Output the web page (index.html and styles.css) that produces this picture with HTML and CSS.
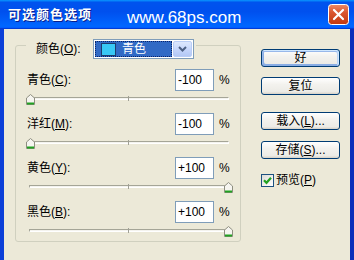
FILE: index.html
```html
<!DOCTYPE html>
<html>
<head>
  <meta charset="utf-8">
  <title>可选颜色选项</title>
  <link rel="stylesheet" href="styles.css">
</head>
<body>
  <div class="window">
    <div class="titlebar">
      <span class="title">可选颜色选项</span>
      <span class="watermark">www.68ps.com</span>
      <svg class="close-btn" width="21" height="21" viewBox="0 0 21 21">
        <defs>
          <linearGradient id="closeFill" x1="0" y1="0" x2="0" y2="1">
            <stop offset="0" stop-color="#EC8A66"/>
            <stop offset="0.4" stop-color="#DA5630"/>
            <stop offset="1" stop-color="#C2380F"/>
          </linearGradient>
        </defs>
        <rect x="0.5" y="0.5" width="20" height="20" rx="3" fill="url(#closeFill)" stroke="#FFFFFF"/>
        <path d="M6 6 L15 15 M15 6 L6 15" stroke="#FFFFFF" stroke-width="2.2" stroke-linecap="round"/>
      </svg>
    </div>

    <div class="client">
      <div class="group">
        <div class="group-head">
          <span class="head-label">颜色(<u>O</u>):</span>
          <div class="select">
            <div class="select-value"><span class="swatch"></span><span>青色</span></div>
            <div class="select-arrow">
              <svg width="9" height="6" viewBox="0 0 9 6"><path d="M1 1 L4.5 4.5 L8 1" stroke="#4D6185" stroke-width="2" fill="none"/></svg>
            </div>
          </div>
        </div>

        <div class="rows">
          <div class="slider-row">
            <div class="row-top">
              <span class="row-label">青色(<u>C</u>):</span>
              <div class="value-box">-100</div>
              <span class="percent">%</span>
            </div>
            <div class="slider">
              <div class="track"></div>
              <span class="tick"></span>
              <svg class="thumb" style="left: 0px" width="9" height="11" viewBox="0 0 9 11"><path d="M0.5 4 L4.5 0.5 L8.5 4 V10.5 H0.5 Z" fill="#F6F5F0" stroke="#8E8E80"/><path d="M1 9.5 H8" stroke="#21A121" stroke-width="2"/></svg>
            </div>
          </div>

          <div class="slider-row">
            <div class="row-top">
              <span class="row-label">洋红(<u>M</u>):</span>
              <div class="value-box">-100</div>
              <span class="percent">%</span>
            </div>
            <div class="slider">
              <div class="track"></div>
              <span class="tick"></span>
              <svg class="thumb" style="left: 0px" width="9" height="11" viewBox="0 0 9 11"><path d="M0.5 4 L4.5 0.5 L8.5 4 V10.5 H0.5 Z" fill="#F6F5F0" stroke="#8E8E80"/><path d="M1 9.5 H8" stroke="#21A121" stroke-width="2"/></svg>
            </div>
          </div>

          <div class="slider-row">
            <div class="row-top">
              <span class="row-label">黄色(<u>Y</u>):</span>
              <div class="value-box">+100</div>
              <span class="percent">%</span>
            </div>
            <div class="slider">
              <div class="track"></div>
              <span class="tick"></span>
              <svg class="thumb" style="left: 198px" width="9" height="11" viewBox="0 0 9 11"><path d="M0.5 4 L4.5 0.5 L8.5 4 V10.5 H0.5 Z" fill="#F6F5F0" stroke="#8E8E80"/><path d="M1 9.5 H8" stroke="#21A121" stroke-width="2"/></svg>
            </div>
          </div>

          <div class="slider-row">
            <div class="row-top">
              <span class="row-label">黑色(<u>B</u>):</span>
              <div class="value-box">+100</div>
              <span class="percent">%</span>
            </div>
            <div class="slider">
              <div class="track"></div>
              <span class="tick"></span>
              <svg class="thumb" style="left: 198px" width="9" height="11" viewBox="0 0 9 11"><path d="M0.5 4 L4.5 0.5 L8.5 4 V10.5 H0.5 Z" fill="#F6F5F0" stroke="#8E8E80"/><path d="M1 9.5 H8" stroke="#21A121" stroke-width="2"/></svg>
            </div>
          </div>
        </div>
      </div>

      <div class="actions">
        <button class="btn btn-default">好</button>
        <button class="btn btn-reset">复位</button>
        <button class="btn btn-load">载入(<u>L</u>)...</button>
        <button class="btn btn-save">存储(<u>S</u>)...</button>
        <label class="check-row">
          <span class="checkbox">
            <svg width="9" height="9" viewBox="0 0 9 9"><path d="M1 4.2 L3.5 6.8 L8 1.8" stroke="#21A121" stroke-width="2.2" fill="none"/></svg>
          </span>
          <span>预览(<u>P</u>)</span>
        </label>
      </div>
    </div>
  </div>
</body>
</html>
```

FILE: styles.css
```css
body {
  margin: 0;
  font-family: "Liberation Sans", "Noto Sans CJK SC", sans-serif;
  font-size: 12px;
  line-height: 14px;
  color: #000;
}

.window {
  width: 354px;
  height: 260px;
  display: flex;
  flex-direction: column;
}

/* title bar */
.titlebar {
  height: 29px;
  flex: none;
  display: flex;
  align-items: center;
  padding: 0 5px 0 8px;
  background: linear-gradient(180deg, #0997ff, #0053ee 8%, #0050ee 40%, #0066ff 88%, #0066ff 93%, #005bff 95%, #003dd7 96%, #003dd7);
}

.title {
  color: #fff;
  font-weight: bold;
  font-size: 13px;
  letter-spacing: 1px;
  text-shadow: 1px 1px #0a1e8c;
}

.watermark {
  margin: 6px 0 0 35px;
  color: #fff;
  font-family: "Liberation Sans", sans-serif;
  font-size: 17px;
}

.close-btn {
  margin-left: auto;
  flex: none;
}

/* client area */
.client {
  flex: 1;
  display: flex;
  background: #ECE9D8;
  border-left: 4px solid #0B3FD8;
  border-right: 4px solid #0A2DBA;
}

.group {
  margin: 16px 0 0 11px;
  width: 226px;
  height: 197px;
  box-sizing: border-box;
  border: 1px solid #D0D0BF;
  border-radius: 3px;
}

.group-head {
  display: flex;
  align-items: center;
  width: 160px;
  height: 20px;
  margin: -7px 0 0 10px;
  padding-left: 10px;
  background: #ECE9D8;
}

.head-label {
  width: 57px;
  flex: none;
}

.select {
  width: 101px;
  height: 20px;
  box-sizing: border-box;
  border: 1px solid #7F9DB9;
  background: #fff;
  padding: 1px;
  display: flex;
}

.select-value {
  flex: 1;
  display: flex;
  align-items: center;
  background: #316AC5;
  border: 1px dotted #0A246A;
  color: #fff;
}

.swatch {
  width: 13px;
  height: 11px;
  margin: 0 6px 0 5px;
  background: #38C8F5;
  border: 1px solid #1E3C6E;
}

.select-arrow {
  width: 17px;
  margin-left: 1px;
  display: flex;
  align-items: center;
  justify-content: center;
  border: 1px solid #B9CDF6;
  border-radius: 2px;
  background: linear-gradient(#DDE8FE, #C3D4FB 60%, #B3C8F5);
}

/* slider rows */
.rows {
  margin-top: 10px;
}

.slider-row {
  margin: 0 10px 0 11px;
}

.row-top {
  display: flex;
  align-items: center;
  height: 22px;
}

.row-label {
  flex: 1;
}

.value-box {
  width: 39px;
  height: 22px;
  box-sizing: border-box;
  border: 1px solid #7F9DB9;
  background: #fff;
  padding: 0 2px;
  line-height: 20px;
}

.percent {
  width: 11px;
  margin-left: 5px;
}

.slider {
  position: relative;
  width: 207px;
  height: 22px;
  box-sizing: border-box;
  padding: 6px 0 0 3px;
  margin-left: -1px;
}

.track {
  width: 200px;
  height: 3px;
  box-sizing: border-box;
  border: 1px solid;
  border-color: #A5A597 #fff #fff #A5A597;
  background: #F4F3EE;
}

.tick {
  position: absolute;
  left: 102px;
  top: 5px;
  width: 1px;
  height: 5px;
  background: #A0A095;
}

.thumb {
  position: absolute;
  top: 3px;
}

/* buttons */
.actions {
  display: flex;
  flex-direction: column;
  width: 79px;
  margin: 20px 0 0 20px;
}

.btn {
  height: 18px;
  padding: 0;
  font: inherit;
  line-height: 14px;
  border: 1px solid #003C74;
  border-radius: 3px;
  background: linear-gradient(#FFFFFF, #F3F2EE 40%, #ECEBE6 86%, #D6D0C5);
}

.btn-default {
  box-shadow: inset -1px 1px #cee7ff, inset 1px 2px #98b8ea, inset -2px 2px #bcd4f6, inset 1px -1px #89ade4, inset 2px -2px #89ade4;
}

.btn-reset {
  margin-top: 10px;
}

.btn-load {
  margin-top: 17px;
}

.btn-save {
  margin-top: 11px;
}

.check-row {
  display: flex;
  align-items: center;
  margin-top: 14px;
}

.checkbox {
  width: 13px;
  height: 13px;
  box-sizing: border-box;
  margin-right: 2px;
  border: 1px solid #1C5180;
  background: linear-gradient(135deg, #DCDCD7, #fff);
  display: flex;
  align-items: center;
  justify-content: center;
}
```
